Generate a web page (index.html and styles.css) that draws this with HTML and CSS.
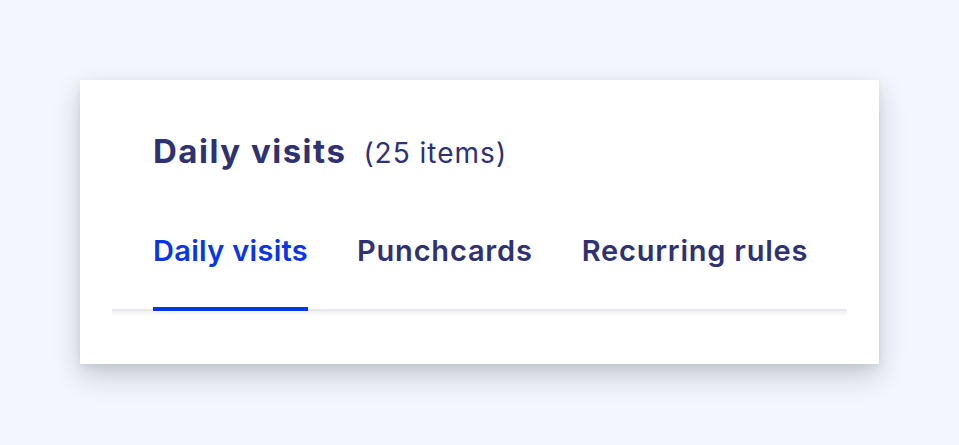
FILE: index.html
```html
<!DOCTYPE html>
<html lang="en">
<head>
<meta charset="utf-8">
<title>Daily visits</title>
<link rel="stylesheet" href="styles.css">
</head>
<body>
<div class="card">
  <div class="header">
    <h1 class="title">Daily visits</h1>
    <span class="count">(25 items)</span>
  </div>
  <nav class="tabs">
    <a class="tab active">Daily visits</a>
    <a class="tab">Punchcards</a>
    <a class="tab">Recurring rules</a>
  </nav>
</div>
</body>
</html>
```
FILE: styles.css
```css
* { box-sizing: border-box; }
html, body { margin: 0; padding: 0; }
body {
  width: 959px;
  height: 445px;
  background: #f3f6fd;
  font-family: Inter, "Noto Sans", sans-serif;
  color: #2e3172;
  padding: 80px 0 0 80px;
}
.card {
  width: 799px;
  height: 284px;
  background: #ffffff;
  box-shadow: 0 12px 26px rgba(30, 32, 50, 0.20), 0 3px 8px rgba(30, 32, 50, 0.08);
  padding: 51px 32px 0;
}
.header {
  display: flex;
  align-items: baseline;
  gap: 17px;
  padding-left: 41px;
}
.title {
  margin: 0;
  font-size: 33px;
  line-height: 40px;
  font-weight: 700;
  letter-spacing: 1.5px;
}
.count {
  font-size: 28px;
  font-weight: 400;
  letter-spacing: 1px;
}
.tabs {
  position: relative;
  display: flex;
  gap: 49px;
  padding-left: 41px;
  margin-top: 62px;
  border-bottom: 2px solid #e7e7ef;
}
.tabs::after {
  content: "";
  position: absolute;
  left: 0;
  right: 0;
  top: calc(100% + 2px);
  height: 5px;
  background: linear-gradient(rgba(236, 236, 242, 0.8), rgba(255, 255, 255, 0));
}
.tab {
  position: relative;
  z-index: 1;
  font-size: 29px;
  line-height: 36px;
  font-weight: 600;
  letter-spacing: 0.8px;
  padding-bottom: 38px;
  border-bottom: 4px solid transparent;
  margin-bottom: -2px;
  color: #2e3172;
  cursor: pointer;
}
.tab.active {
  color: #0a35e6;
  border-bottom-color: #0a35e6;
  letter-spacing: 0.3px;
}
```
